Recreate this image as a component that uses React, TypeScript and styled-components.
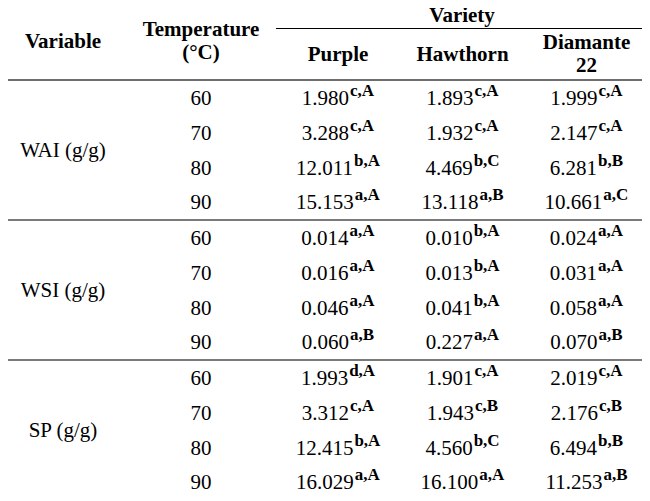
import React from 'react';
import styled from 'styled-components';

// cancels the default 8px body margin
const Wrapper = styled.div`
  margin: -8px;
  width: 650px;
  height: 501px;
  padding-top: 1px;
  box-sizing: border-box;
  overflow: hidden;
  background: #ffffff;
  color: #000;
  font-family: "Liberation Serif", "Times New Roman", serif !important;
`;

const Table = styled.table`
  width: 648px;
  border-collapse: collapse;
  table-layout: fixed;
  font-family: "Liberation Serif", "Times New Roman", serif !important;
  border-top: 2px solid #7a7a7a;
`;

const HeadCell = styled.th<{ $line?: boolean; $h: number }>`
  font-family: "Liberation Serif", "Times New Roman", serif !important;
  font-weight: bold;
  font-size: 21px;
  line-height: 23px;
  text-align: center;
  vertical-align: middle;
  padding: 0;
  height: ${(p) => p.$h}px;
  border-bottom: ${(p) => (p.$line ? '1px solid #000' : 'none')};
`;

const HeadRow = styled.tr`
  border-bottom: 2px solid #6e6e6e;
`;

const GroupBody = styled.tbody`
  border-bottom: 2px solid #7a7a7a;

  &:last-of-type {
    border-bottom: 2px solid #4a4a4a;
  }
`;

const Row = styled.tr`
  height: 35px;
`;

const Cell = styled.td`
  font-family: "Liberation Serif", "Times New Roman", serif !important;
  font-size: 21px;
  line-height: 24px;
  text-align: center;
  vertical-align: middle;
  padding: 0;
  white-space: nowrap;
`;

const Sup = styled.sup`
  font-family: "Liberation Serif", "Times New Roman", serif !important;
  font-size: 17px;
  font-weight: bold;
  line-height: 0;
  vertical-align: 9px;
  margin-left: 1px;
`;

type Value = [string, string];

interface Group {
  label: string;
  rows: { temp: number; values: Value[] }[];
}

const groups: Group[] = [
  {
    label: 'WAI (g/g)',
    rows: [
      { temp: 60, values: [['1.980', 'c,A'], ['1.893', 'c,A'], ['1.999', 'c,A']] },
      { temp: 70, values: [['3.288', 'c,A'], ['1.932', 'c,A'], ['2.147', 'c,A']] },
      { temp: 80, values: [['12.011', 'b,A'], ['4.469', 'b,C'], ['6.281', 'b,B']] },
      { temp: 90, values: [['15.153', 'a,A'], ['13.118', 'a,B'], ['10.661', 'a,C']] },
    ],
  },
  {
    label: 'WSI (g/g)',
    rows: [
      { temp: 60, values: [['0.014', 'a,A'], ['0.010', 'b,A'], ['0.024', 'a,A']] },
      { temp: 70, values: [['0.016', 'a,A'], ['0.013', 'b,A'], ['0.031', 'a,A']] },
      { temp: 80, values: [['0.046', 'a,A'], ['0.041', 'b,A'], ['0.058', 'a,A']] },
      { temp: 90, values: [['0.060', 'a,B'], ['0.227', 'a,A'], ['0.070', 'a,B']] },
    ],
  },
  {
    label: 'SP (g/g)',
    rows: [
      { temp: 60, values: [['1.993', 'd,A'], ['1.901', 'c,A'], ['2.019', 'c,A']] },
      { temp: 70, values: [['3.312', 'c,A'], ['1.943', 'c,B'], ['2.176', 'c,B']] },
      { temp: 80, values: [['12.415', 'b,A'], ['4.560', 'b,C'], ['6.494', 'b,B']] },
      { temp: 90, values: [['16.029', 'a,A'], ['16.100', 'a,A'], ['11.253', 'a,B']] },
    ],
  },
];

const App: React.FC = () => {
  return (
    <Wrapper>
      <Table>
        <colgroup>
          <col style={{ width: 126 }} />
          <col style={{ width: 150 }} />
          <col style={{ width: 124 }} />
          <col style={{ width: 125 }} />
          <col style={{ width: 123 }} />
        </colgroup>
        <thead>
          <tr>
            <HeadCell rowSpan={2} $h={25}>Variable</HeadCell>
            <HeadCell rowSpan={2} $h={25}>
              Temperature
              <br />
              (°C)
            </HeadCell>
            <HeadCell colSpan={3} $h={25} $line>
              Variety
            </HeadCell>
          </tr>
          <HeadRow>
            <HeadCell $h={50}>Purple</HeadCell>
            <HeadCell $h={50}>Hawthorn</HeadCell>
            <HeadCell $h={50}>
              Diamante
              <br />
              22
            </HeadCell>
          </HeadRow>
        </thead>
        {groups.map((g) => (
          <GroupBody key={g.label}>
            {g.rows.map((r, i) => (
              <Row key={r.temp}>
                {i === 0 && <Cell rowSpan={4}>{g.label}</Cell>}
                <Cell>{r.temp}</Cell>
                {r.values.map(([num, sup], j) => (
                  <Cell key={j}>
                    {num}
                    <Sup>{sup}</Sup>
                  </Cell>
                ))}
              </Row>
            ))}
          </GroupBody>
        ))}
      </Table>
    </Wrapper>
  );
};

export default App;
